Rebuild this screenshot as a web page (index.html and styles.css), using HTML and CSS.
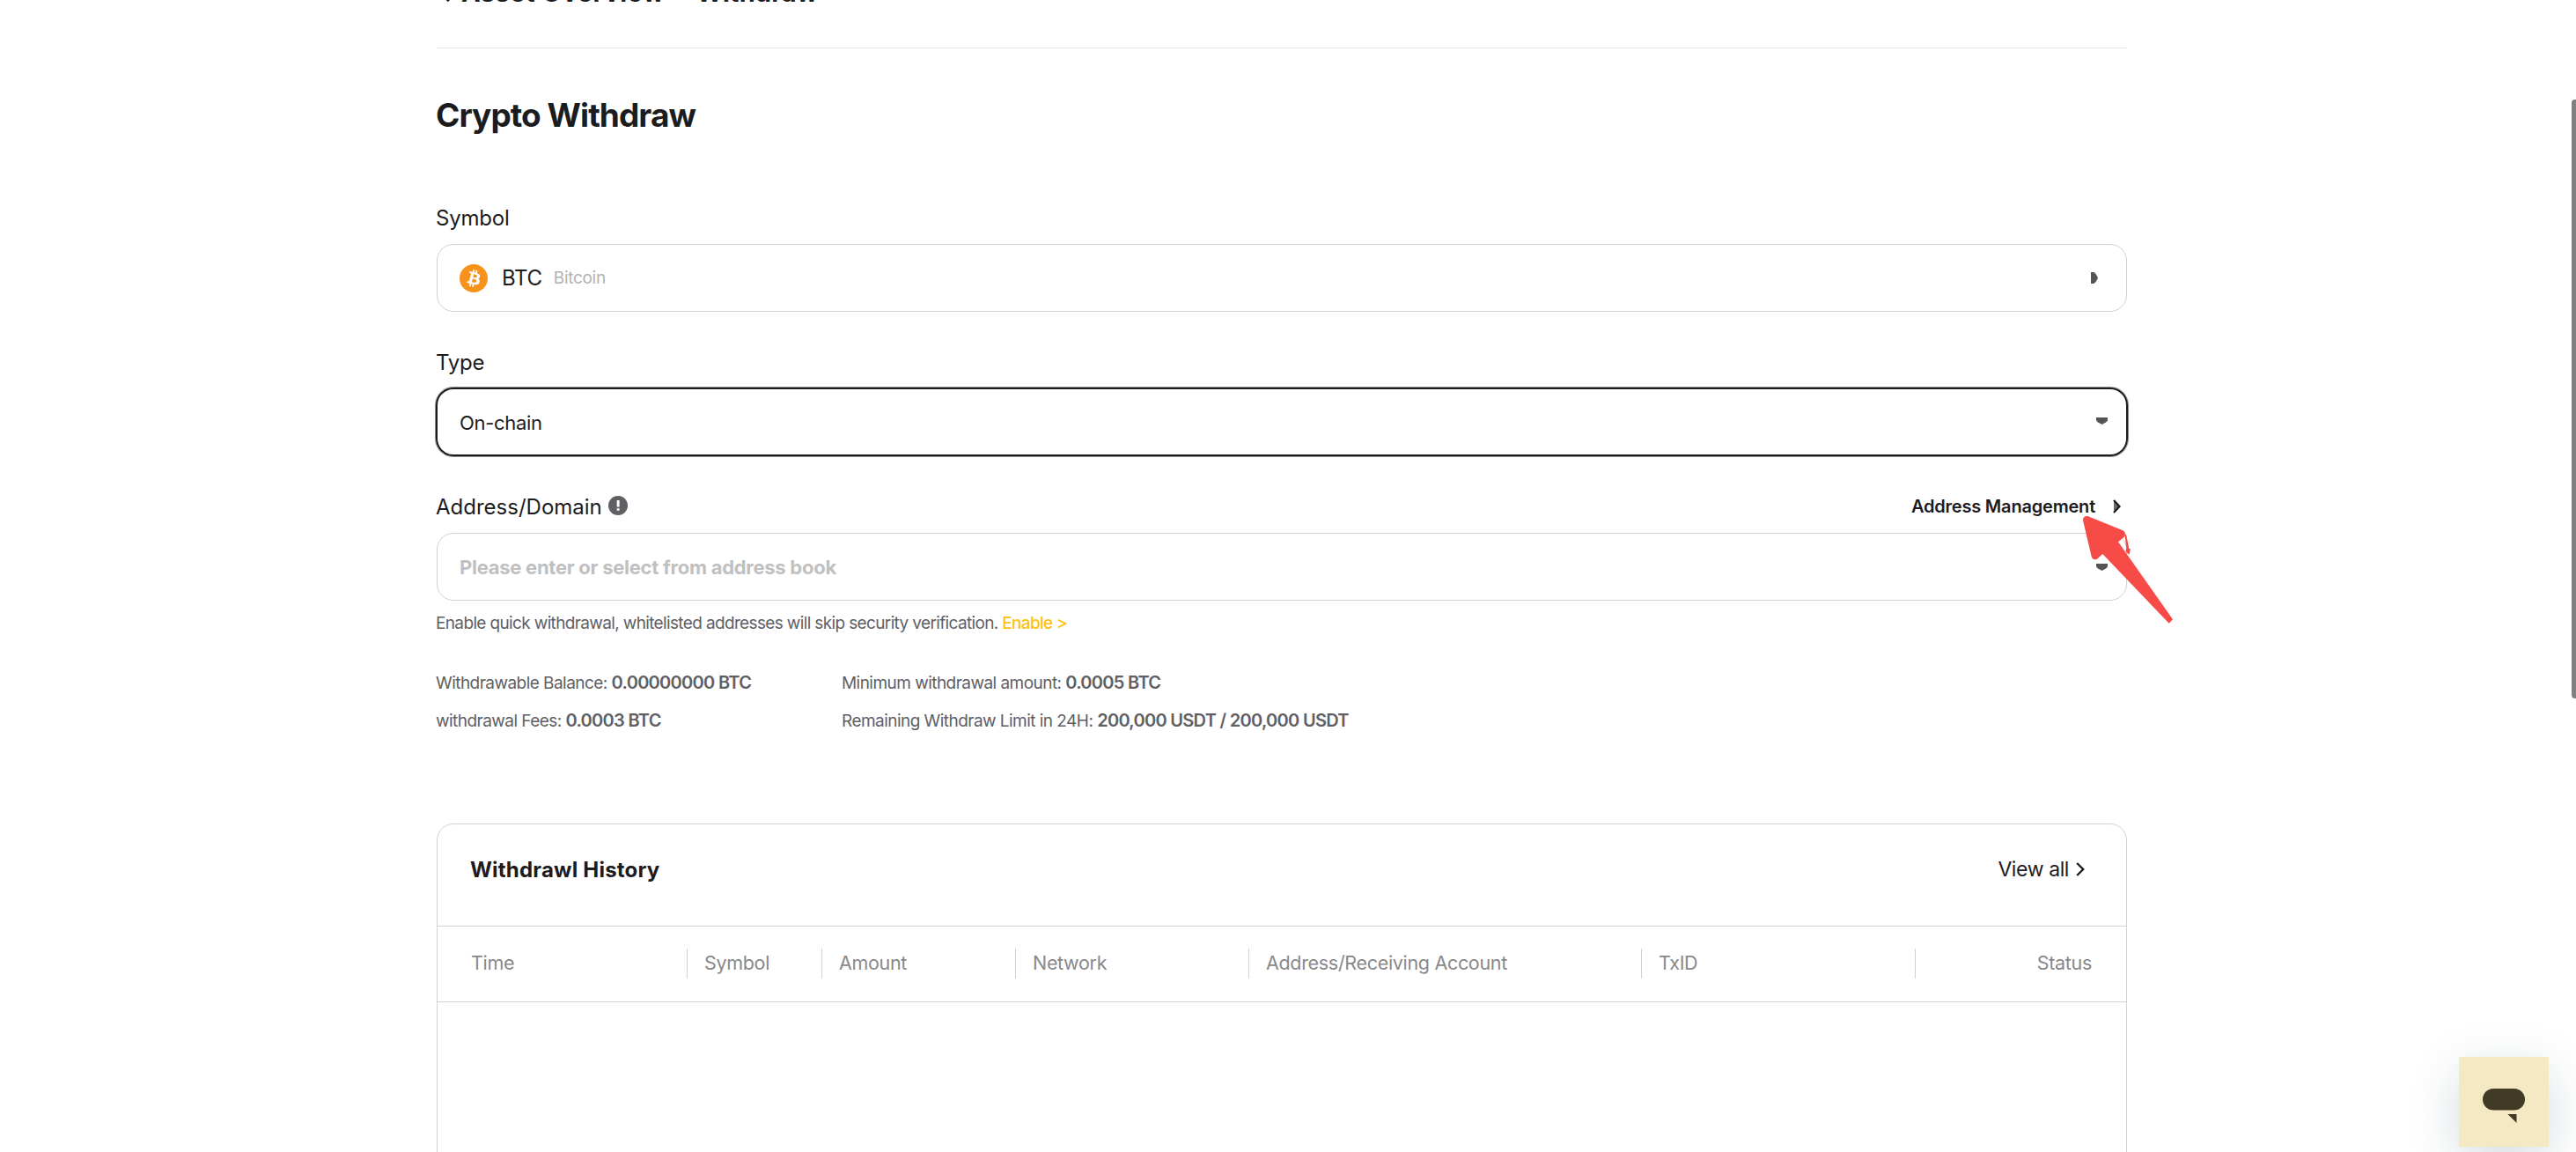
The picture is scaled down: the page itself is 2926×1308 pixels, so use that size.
FILE: index.html
```
<!DOCTYPE html>
<html lang="en">
<head>
    <meta charset="UTF-8">
    <title>Crypto Withdraw</title>
    <link rel="stylesheet" href="styles.css">
</head>
<body>
<div class="container">
    <div class="crumb">
        <svg class="crumb-arrow" width="14" height="24" viewBox="0 0 14 24"><path d="M12 2L3 12l9 10" fill="none" stroke="#1c1c1e" stroke-width="3.5"/></svg>
        <span class="crumb-parent">Asset Overview</span>
        <span class="crumb-line">-</span>
        <span class="crumb-current">Withdraw</span>
    </div>

    <h1 class="title">Crypto Withdraw</h1>

    <div class="field">
        <div class="label"><span class="label-short">Symbol</span></div>
        <div class="box box-coin">
            <svg class="coin" width="32" height="32" viewBox="0 0 32 32">
                <circle cx="16" cy="16" r="16" fill="#f7931a"/>
                <path fill="#fff" d="M23.189 14.02c.314-2.096-1.283-3.223-3.465-3.975l.708-2.84-1.728-.43-.69 2.765c-.454-.114-.92-.22-1.385-.326l.695-2.783L15.596 6l-.708 2.839c-.376-.086-.746-.17-1.104-.26l.002-.009-2.384-.595-.46 1.846s1.283.294 1.256.312c.7.175.826.638.805 1.006l-.806 3.235c.048.012.11.03.18.057l-.183-.045-1.13 4.532c-.086.212-.303.531-.793.41.018.025-1.256-.313-1.256-.313l-.858 1.978 2.25.561c.418.105.828.215 1.231.318l-.715 2.872 1.727.43.708-2.84c.472.127.93.245 1.378.357l-.706 2.828 1.728.43.715-2.866c2.948.558 5.164.333 6.097-2.333.752-2.146-.037-3.385-1.588-4.192 1.13-.26 1.98-1.003 2.207-2.538zm-3.95 5.538c-.533 2.147-4.148.986-5.32.695l.95-3.805c1.172.293 4.929.872 4.37 3.11zm.535-5.569c-.487 1.953-3.495.96-4.47.717l.86-3.45c.975.243 4.118.696 3.61 2.733z"/>
            </svg>
            <span class="coin-code">BTC</span>
            <span class="coin-name">Bitcoin</span>
            <svg class="caret" width="8" height="13" viewBox="0 0 8 13"><path d="M0 0h3C5 .5 6.500 3.500 8 6.500 6.500 9.500 5 12.500 3 13H0z" fill="#555"/></svg>
        </div>
    </div>

    <div class="field">
        <div class="label"><span class="label-short">Type</span></div>
        <div class="box box-focus">
            <span class="value">On-chain</span>
            <svg class="caret" width="13" height="8" viewBox="0 0 13 8"><path d="M0 0v3C.5 5 3.500 6.500 6.500 8 9.500 6.500 12.500 5 13 3V0z" fill="#555"/></svg>
        </div>
    </div>

    <div class="field">
        <div class="label">
            <span class="label-long">Address/Domain</span>
            <svg class="info-icon" width="22" height="22" viewBox="0 0 22 22">
                <circle cx="11" cy="11" r="11" fill="#606064"/>
                <path d="M9.700 5h2.900v7.500H9.700zM9.700 14.300h2.900v2.400H9.700z" fill="#fff"/>
            </svg>
            <a class="manage">Address Management
                <svg width="9" height="16" viewBox="0 0 9 16"><path d="M1 1l6.500 7L1 15z" fill="#6b6b6f"/><path d="M1 1l6.500 7L1 15" fill="none" stroke="#1c1c1e" stroke-width="2.200"/></svg>
            </a>
        </div>
        <div class="box">
            <span class="placeholder">Please enter or select from address book</span>
            <svg class="caret" width="13" height="8" viewBox="0 0 13 8"><path d="M0 0v3C.5 5 3.500 6.500 6.500 8 9.500 6.500 12.500 5 13 3V0z" fill="#555"/></svg>
        </div>
    </div>

    <div class="hint">Enable quick withdrawal, whitelisted addresses will skip security verification. <a>Enable &gt;</a></div>

    <div class="info">
        <div>Withdrawable Balance: <b>0.00000000 BTC</b></div>
        <div>Minimum withdrawal amount: <b>0.0005 BTC</b></div>
        <div>withdrawal Fees: <b>0.0003 BTC</b></div>
        <div>Remaining Withdraw Limit in 24H: <b>200,000 USDT / 200,000 USDT</b></div>
    </div>

    <div class="history">
        <div class="history-head">
            <h2>Withdrawl History</h2>
            <a class="view-all">View all
                <svg width="10" height="16" viewBox="0 0 10 16"><path d="M1.200 1l7 7-7 7" fill="none" stroke="#1c1c1e" stroke-width="2.400"/></svg>
            </a>
        </div>
        <div class="history-cols">
            <div>Time</div>
            <div>Symbol</div>
            <div>Amount</div>
            <div>Network</div>
            <div>Address/Receiving Account</div>
            <div>TxID</div>
            <div>Status</div>
        </div>
    </div>
</div>

<!-- pointer to Address Management -->
<svg class="pointer" width="420" height="190" viewBox="0 0 1260 570">
    <path fill="#f74b47" d="M798 152Q798 136 814 138L934 187Q946 194 940 208L918 226L1104 490L1091 503L865 267L846 284Q832 290 827 276z"/>
    <path fill="#f74b47" d="M940 196L946 204L955 249L960 250L955 270L943 258L946 248z"/>
</svg>

<div class="scrollbar"></div>

<div class="chat">
    <svg width="48" height="39" viewBox="0 0 48 39"><rect width="48" height="24.500" rx="12.250" fill="#413a24"/><path d="M28.500 29H38.500v10z" fill="#413a24"/></svg>
</div>
</body>
</html>
```
FILE: styles.css
```
*{
    padding:0;
    margin:0;
    box-sizing:border-box;
}

body{
    height:1308px;
    overflow:hidden;
    background-color:#fff;
    color:#1c1c1e;
    font-family:Inter, "Liberation Sans", sans-serif;
    font-size:24px;
}

.container{
    width:1920px;
    margin-left:496px;
}

/* breadcrumb, scrolled mostly out of view */
.crumb{
    display:flex;
    align-items:center;
    height:83px;
    margin-top:-28px;
    padding:0 0 44px 2px;
    border-bottom:1px solid #e2e2e4;
    font-size:29px;
    font-weight:700;
    line-height:39px;
}

.crumb-arrow{
    margin-right:12px;
}

.crumb-parent{
    letter-spacing:.5px;
}

.crumb-line{
    margin:0 11px 0 11px;
}

.crumb-current{
    letter-spacing:.1px;
}

.title{
    margin:51px 0 77px;
    font-size:37px;
    font-weight:700;
    line-height:49px;
    letter-spacing:-.95px;
    text-indent:-1px;
}

.field{
    margin-bottom:42px;
}

.label{
    display:flex;
    align-items:center;
    height:30px;
    margin-bottom:15px;
}

.label-short,
.label-long{
    margin-left:-1px;
}

.label-short{
    letter-spacing:-.2px;
}

.info-icon{
    margin:-2px 0 0 7px;
}

.manage{
    display:flex;
    align-items:center;
    gap:20px;
    margin-left:auto;
    padding-right:7px;
    font-size:20px;
    font-weight:600;
    letter-spacing:-.2px;
}

.box{
    display:flex;
    align-items:center;
    height:77px;
    padding:0 21px 0 25px;
    border:1px solid #d2d2d4;
    border-radius:19px;
    font-size:22px;
}

.box-coin{
    padding-right:32px;
}

.box-focus{
    height:78px;
    margin:-1px -1px 0;
    border:2px solid #1c1c1e;
    border-radius:20px;
    box-shadow:0 0 0 1px #8e8e90;
}

.caret{
    margin-left:auto;
}

.box-focus .caret{
    margin-bottom:2px;
}

.coin-code{
    margin:0 13px 0 16px;
    font-size:24px;
    letter-spacing:-.3px;
}

.coin-name{
    color:#b2b2b4;
    font-size:19px;
    letter-spacing:-.3px;
}

.value{
    padding-top:2px;
    letter-spacing:-.3px;
}

.placeholder{
    color:#c0c0c1;
    font-weight:700;
    letter-spacing:-.27px;
}

.hint{
    margin-top:-28px;
    color:#606064;
    font-size:19px;
    line-height:24px;
    letter-spacing:-.64px;
    text-indent:-1px;
}

.hint a{
    color:#fcc20f;
    font-weight:500;
    letter-spacing:-.7px;
}

.info{
    display:grid;
    grid-template-columns:461px 1fr;
    margin:34px 0 0 -1px;
    color:#606064;
    font-size:19px;
    line-height:43px;
    letter-spacing:-.54px;
}

.info b{
    font-size:20px;
    font-weight:600;
    line-height:20px;
    letter-spacing:-.7px;
}

.history{
    height:420px;
    margin-top:95px;
    border:1px solid #d2d2d4;
    border-radius:19px 19px 0 0;
}

.history-head{
    display:flex;
    justify-content:space-between;
    height:116px;
    padding:34px 47px 0 37px;
    border-bottom:1px solid #d2d2d4;
    line-height:35px;
}

.history-head h2{
    font-size:24px;
    font-weight:700;
    letter-spacing:.2px;
}

.view-all{
    display:flex;
    align-items:center;
    gap:8px;
    height:34px;
    font-size:23px;
    letter-spacing:-.4px;
}

.history-cols{
    display:grid;
    grid-template-columns:283px 153px 220px 265px 446px 311px 1fr;
    height:86px;
    padding-top:25px;
    border-bottom:1px solid #d2d2d4;
    color:#88888b;
    font-size:21.5px;
    letter-spacing:-.32px;
}

.history-cols div{
    height:34px;
    padding-left:19px;
    border-left:1px solid #d2d2d4;
    line-height:33px;
}

.history-cols div:first-child{
    padding-left:37px;
    border-left-color:transparent;
}

.history-cols div:last-child{
    padding-right:39px;
    text-align:right;
}

.pointer{
    position:absolute;
    left:2100px;
    top:540px;
}

.scrollbar{
    position:fixed;
    top:113px;
    right:0;
    width:5px;
    height:680px;
    border-radius:4px 0 0 4px;
    background-color:#808080;
}

.chat{
    position:fixed;
    left:2793px;
    top:1200px;
    width:102px;
    height:102px;
    padding:36px 0 0 27px;
    background-color:#f5e9c4;
    box-shadow:0 16px 56px rgba(20,50,70,.18);
}

.chat svg{
    display:block;
}
```
